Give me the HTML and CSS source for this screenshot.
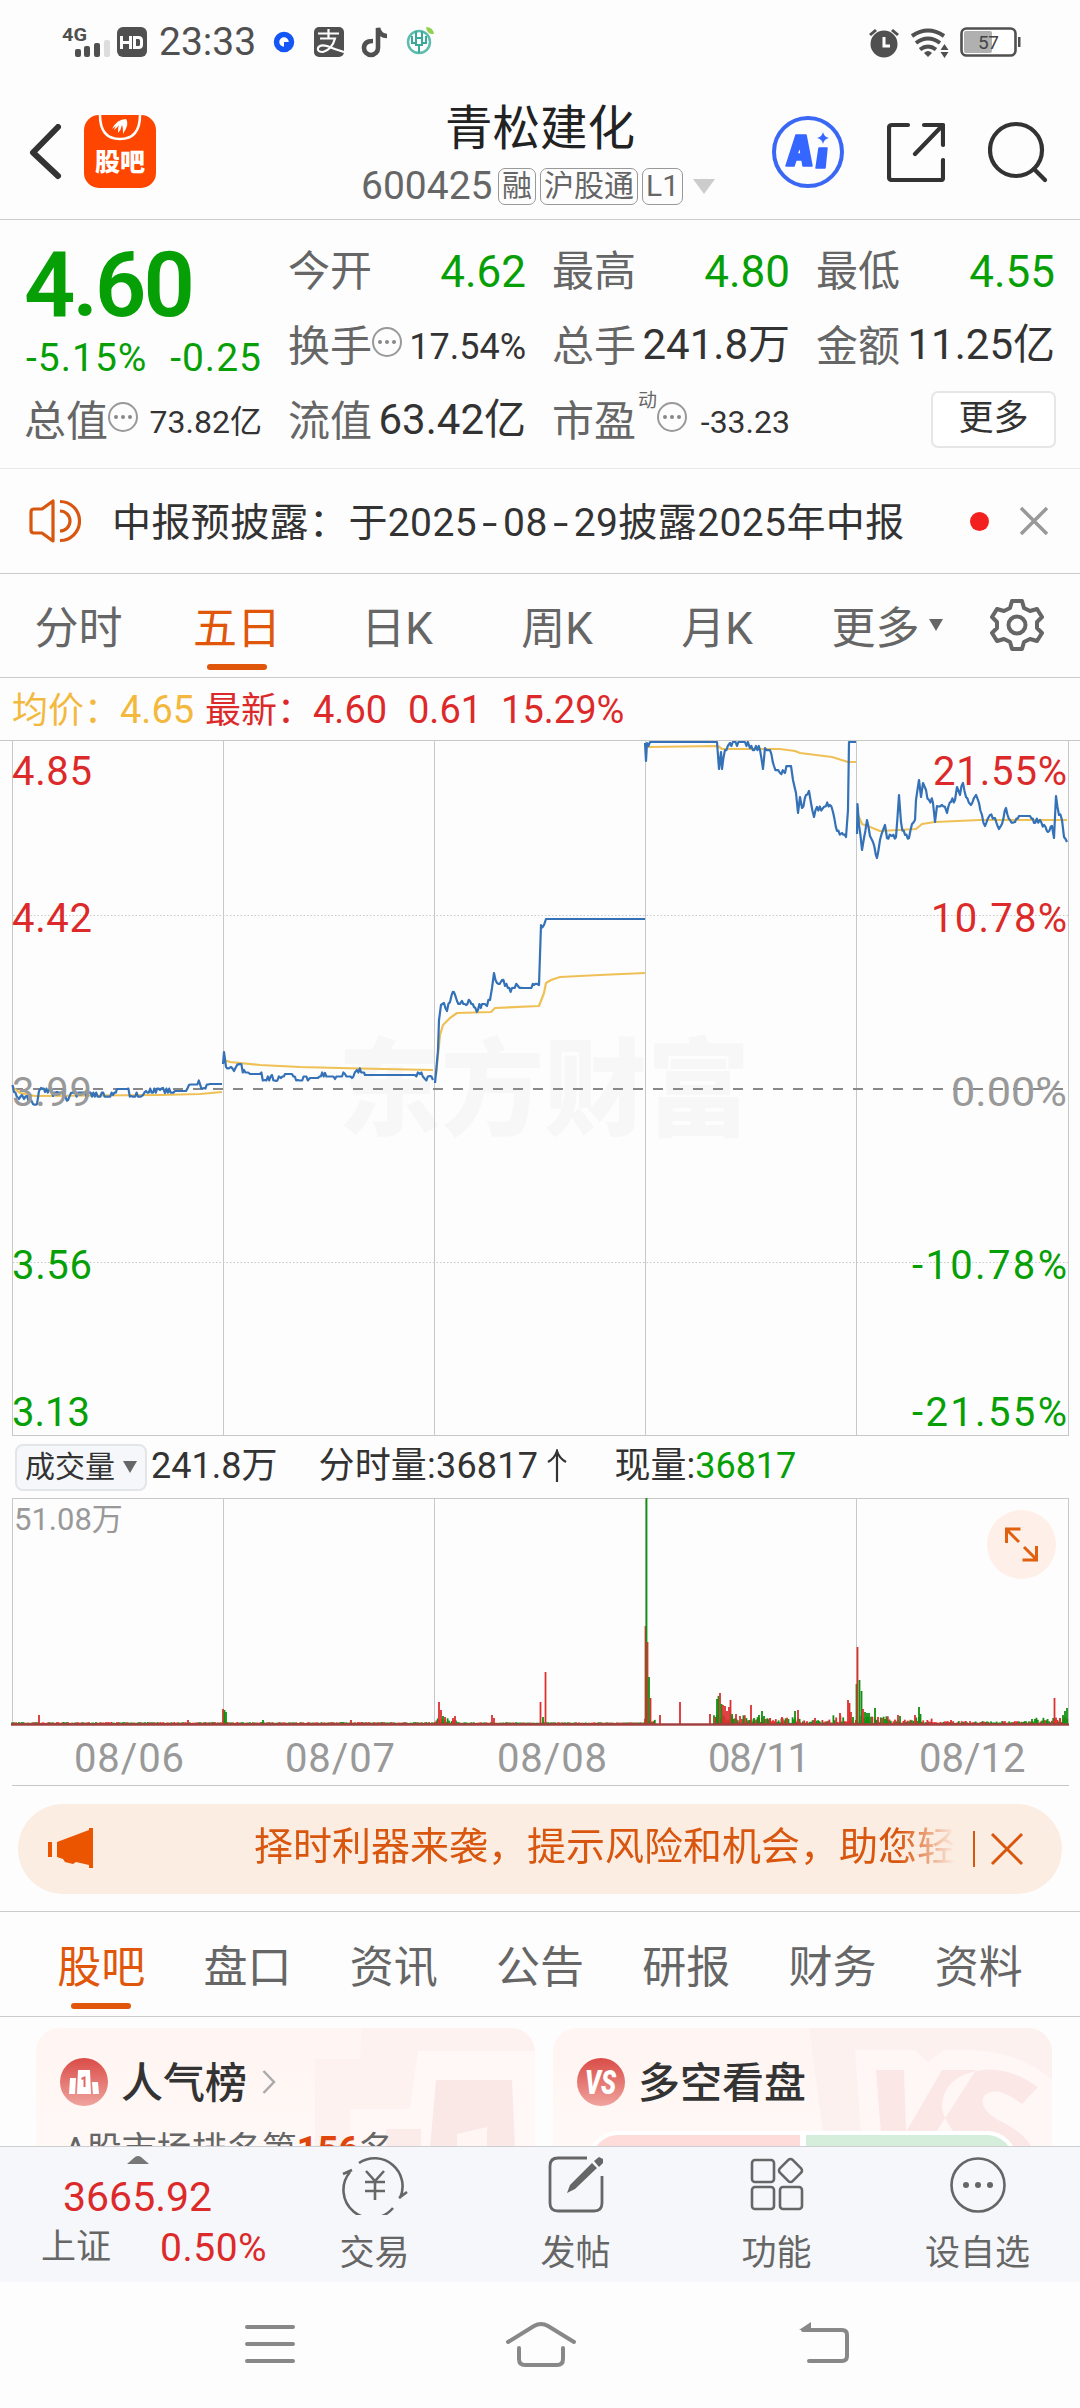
FILE: index.html
```html
<!DOCTYPE html>
<html lang="zh-CN">
<head>
    <meta charset="UTF-8">
    <meta name="viewport" content="width=device-width, initial-scale=1.0">
    <title>青松建化 600425</title>
    <link rel="stylesheet" href="styles.css">
</head>
<body>
    <!-- Status bar -->
    <div class="status">
        <svg class="status-left" width="90" height="36" viewBox="60 24 90 36">
            <text x="62" y="41" font-size="19" font-weight="700" fill="#505050" textLength="25" lengthAdjust="spacingAndGlyphs">4G</text>
            <g fill="#505050">
                <rect x="75" y="49" width="6" height="8" rx="2"/>
                <rect x="84" y="46" width="6" height="11" rx="2"/>
                <rect x="94" y="43" width="6" height="14" rx="2"/>
            </g>
            <rect x="104" y="40" width="6" height="17" rx="2" fill="#ddd"/>
            <rect x="117" y="27" width="30" height="30" rx="6" fill="#505050"/>
            <path d="M121.500 36v13M130.500 36v13M121.500 42.500h9M134.500 37.500h4q3 0 3 3v4q0 3-3 3h-4z" fill="none" stroke="#fff" stroke-width="3"/>
        </svg>
        <span class="clock">23:33</span>
        <svg width="170" height="36" viewBox="270 24 170 36">
            <circle cx="284" cy="42" r="7.500" fill="none" stroke="#1456f5" stroke-width="5.500"/>
            <path d="M284 42h6v-4l2 10h-8z" fill="#1456f5"/>
            <rect x="314" y="27" width="30" height="30" rx="5" fill="#505050"/>
            <path d="M318 33.500h21M328.500 29v9M320 38.500h15q-3 11-12 13.500q-6 0-5-4q2-4 9-2q7 3 17 6" fill="none" stroke="#fff" stroke-width="2.200"/>
            <path d="M373 41q-9 0-9 7a6.500 6.500 0 0 0 14 0V28q2 8 9 8" fill="none" stroke="#505050" stroke-width="4.600"/>
            <circle cx="419" cy="42" r="11" fill="none" stroke="#5dbcae" stroke-width="2.500"/>
            <path d="M416 31v7M422 31v7M412 36v7h3M426 36v7h-3M416 38h6v7h-6zM419 45v8" fill="none" stroke="#3aa999" stroke-width="2"/>
            <path d="M426 27q7 0 8 7q-7 1-8-7z" fill="#8fd14f"/>
        </svg>
        <svg class="status-right" width="156" height="36" viewBox="866 24 156 36">
            <g fill="#505050">
                <circle cx="884" cy="44" r="13.500"/>
                <path d="M869 34l6-5 2 2-6 5zM899 34l-6-5-2 2 6 5z"/>
                <path d="M928 57l-4-4q4-4 8 0z"/>
                <path d="M944.500 44l4 6h-8zM944.500 58l4-6h-8z"/>
            </g>
            <path d="M884 37v9h6" fill="none" stroke="#fff" stroke-width="3"/>
            <path d="M912 36q16-11 32 0M916 43q12-9 24 0M920 49.500q8-6 16 0" fill="none" stroke="#505050" stroke-width="4"/>
            <rect x="961.500" y="28.500" width="54" height="27" rx="5" fill="#fff" stroke="#505050" stroke-width="2.600"/>
            <rect x="964" y="31" width="28" height="22" rx="2" fill="#b0b0b0"/>
            <rect x="1018" y="37" width="2.500" height="10" fill="#505050"/>
            <text x="978" y="49" font-size="19" fill="#444" textLength="21">57</text>
        </svg>
    </div>

    <!-- Title bar -->
    <header class="header">
        <div class="header-side">
            <svg width="34" height="56" viewBox="0 0 34 56"><path d="M29 3L4 28.500L29 52" fill="none" stroke="#333" stroke-width="6" stroke-linecap="round" stroke-linejoin="round"/></svg>
            <div class="guba">
                <svg width="44" height="26" viewBox="0 0 44 26"><path d="M2 0q0 24 20 24T42 0" fill="none" stroke="#fff" stroke-width="2.500"/><path d="M14 14q5-10 14-10q4 4-3 15q0-7-1-9q-1 5-4 8q0-6 1-8q-2 3-5 5q1-3 2-4z" fill="#fff"/></svg>
                <span>股吧</span>
            </div>
        </div>
        <div class="header-title">
            <h1>青松建化</h1>
            <div class="code-row">
                <span class="code">600425</span>
                <span class="tag">融</span>
                <span class="tag">沪股通</span>
                <span class="tag">L1</span>
                <i class="drop"></i>
            </div>
        </div>
        <div class="header-icons">
            <svg width="72" height="74" viewBox="0 0 72 74">
                <circle cx="36" cy="37" r="34" fill="none" stroke="#3a68f5" stroke-width="4"/>
                <path d="M24 20h10l6 31h-9l-1-6h-6l-2 6h-8zM28 31l-3 8h4zM47 33h8l-2 20h-9z" fill="#3566ff" stroke="#3566ff" stroke-width="1.500" stroke-linejoin="round" fill-rule="evenodd"/>
                <path d="M51 17q1 5 6 6q-5 1-6 6q-1-5-6-6q5-1 6-6z" fill="#3566ff"/>
            </svg>
            <svg width="58" height="60" viewBox="0 0 58 60" fill="none" stroke="#333" stroke-width="4.200" stroke-linecap="round" stroke-linejoin="round"><path d="M21 3H5q-3 0-3 3v49q0 3 3 3h49q2 0 2-2V38M37 3h19v20M55 4L28 32"/></svg>
            <svg width="60" height="62" viewBox="0 0 60 62" fill="none" stroke="#333" stroke-width="4.200" stroke-linecap="round"><circle cx="28" cy="29" r="26"/><path d="M46 48l11 11"/></svg>
        </div>
    </header>

    <!-- Quote numbers -->
    <section class="quote">
        <div class="price">
            <div class="price-now">4.60</div>
            <div class="price-change"><span>-5.15%</span><span>-0.25</span></div>
        </div>
        <div class="cell"><label>今开</label><b class="green">4.62</b></div>
        <div class="cell"><label>最高</label><b class="green">4.80</b></div>
        <div class="cell"><label>最低</label><b class="green">4.55</b></div>
        <div class="cell"><label>换手</label><i class="info"></i><b class="mid">17.54%</b></div>
        <div class="cell"><label>总手</label><b>241.8万</b></div>
        <div class="cell"><label>金额</label><b>11.25亿</b></div>
        <div class="cell"><label>总值</label><i class="info"></i><b class="small">73.82亿</b></div>
        <div class="cell"><label>流值</label><b>63.42亿</b></div>
        <div class="cell"><label>市盈</label><sup>动</sup><i class="info"></i><b class="small">-33.23</b></div>
        <div class="cell"><button class="more">更多</button></div>
    </section>

    <!-- Notice -->
    <section class="notice">
        <svg width="52" height="46" viewBox="0 0 52 46" fill="none" stroke="#d9560f" stroke-width="3.200"><path d="M2 14q0-3 3-3h8l11-8v40l-11-8H5q-3 0-3-3zM31 3.500a19.500 19.500 0 0 1 0 39M31 13a10 10 0 0 1 0 20" stroke-linejoin="round"/></svg>
        <p>中报预披露：于2025<span>-</span>08<span>-</span>29披露2025年中报</p>
        <i class="dot"></i>
        <svg width="30" height="30" viewBox="0 0 30 30"><path d="M2 2l26 26M28 2L2 28" stroke="#999" stroke-width="3.500"/></svg>
    </section>

    <!-- Period tabs -->
    <nav class="periods">
        <a>分时</a>
        <a class="on">五日</a>
        <a>日K</a>
        <a>周K</a>
        <a>月K</a>
        <a>更多<i class="caret"></i></a>
        <svg width="54" height="54" viewBox="-27 -27 54 54" fill="none" stroke="#666" stroke-width="4"><path d="M-5-24H5L7-17L13-14L20-16L25-8L20-3V3L25 8L20 16L13 14L7 17L5 24H-5L-7 17L-13 14L-20 16L-25 8L-20 3V-3L-25-8L-20-16L-13-14L-7-17Z" stroke-linejoin="round"/><circle r="8.500"/></svg>
    </nav>

    <div class="legend">
        <span class="avg"><em>均价：</em>4.65</span>
        <span class="last"><em>最新：</em>4.60</span>
        <span>0.61</span>
        <span>15.29%</span>
    </div>

    <!-- Price chart -->
    <svg class="chart" width="1080" height="696" viewBox="0 740 1080 696">
        <text class="watermark" x="338" y="1127" textLength="412" lengthAdjust="spacingAndGlyphs">东方财富</text>
        <g class="grid">
            <path d="M0 740.500H1080M12 1435.500H1069M12.500 740V1436M223.500 740V1436M434.500 740V1436M645.500 740V1436M856.500 740V1436M1068.500 740V1436"/>
            <path d="M13 915.500H1068M13 1262.500H1068" stroke-dasharray="1.500 2"/>
        </g>
        <path d="M13 1089H1068" stroke="#888" stroke-width="2" stroke-dasharray="10 10"/>
        <g id="averages" class="line-avg"></g>
        <g id="prices" class="line-price"></g>
        <g class="axis">
            <text class="up" x="12" y="785" textLength="80">4.85</text>
            <text class="up" x="12" y="932" textLength="80">4.42</text>
            <text x="12" y="1106" textLength="80">3.99</text>
            <text class="down" x="12" y="1279" textLength="80">3.56</text>
            <text class="down" x="12" y="1426">3.13</text>
        </g>
        <g class="axis end">
            <text class="up" x="1067" y="785" textLength="134">21.55%</text>
            <text class="up" x="1067" y="932" textLength="136">10.78%</text>
            <text x="1067" y="1106" textLength="116" lengthAdjust="spacingAndGlyphs">0.00%</text>
            <text class="down" x="1067" y="1279" textLength="155">-10.78%</text>
            <text class="down" x="1067" y="1426" textLength="155">-21.55%</text>
        </g>
    </svg>

    <div class="volume-bar">
        <button>成交量<i class="caret"></i></button>
        <span>241.8万</span>
        <span class="minute">分时量:36817<svg width="22" height="34" viewBox="0 0 22 34"><path d="M11 33V2M2 13q7-4 9-11q2 7 9 11" fill="none" stroke="#333" stroke-width="2.200"/></svg></span>
        <span>现量:<b>36817</b></span>
    </div>

    <!-- Volume chart -->
    <svg class="chart" width="1080" height="289" viewBox="0 1498 1080 289">
        <path class="grid" d="M12 1498.500H1069M12.500 1498V1724M223.500 1498V1724M434.500 1498V1724M645.500 1498V1724M856.500 1498V1724M1068.500 1498V1724M12 1785.500H1069"/>
        <text class="vol-max" x="14" y="1530">51.08万</text>
        <g id="volumes"></g>
        <path d="M11 1724.500H1069" stroke="#a04040" stroke-width="2.400"/>
        <g class="axis">
            <text class="day" x="74" y="1772" textLength="110">08/06</text>
            <text class="day" x="285" y="1772" textLength="110">08/07</text>
            <text class="day" x="497" y="1772" textLength="110">08/08</text>
            <text class="day" x="708" y="1772" textLength="102">08/11</text>
            <text class="day" x="919" y="1772">08/12</text>
        </g>
        <circle cx="1021.500" cy="1544.500" r="34.500" fill="#fef0e8"/>
        <path d="M1006.500 1543v-14h14M1007 1530l12 12M1036.500 1546v14h-14M1036 1559l-12-12" fill="none" stroke="#e06010" stroke-width="3"/>
    </svg>

    <!-- Promo banner -->
    <div class="banner">
        <svg width="46" height="42" viewBox="0 0 46 42" fill="#eb5500"><path d="M0 14h4v15H0zM9 14L41 2V0h4v40h-4v-3l-13-3-3 2-8-2-2-3-6-2z"/></svg>
        <div class="banner-text">择时利器来袭，提示风险和机会，助您轻</div>
        <i></i>
        <svg width="34" height="34" viewBox="0 0 34 34"><path d="M2 2l30 30M32 2L2 32" stroke="#d9560f" stroke-width="3"/></svg>
    </div>

    <!-- Content tabs -->
    <nav class="sections">
        <a class="on">股吧</a>
        <a>盘口</a>
        <a>资讯</a>
        <a>公告</a>
        <a>研报</a>
        <a>财务</a>
        <a>资料</a>
    </nav>

    <div class="cards">
        <div class="card">
            <svg class="card-art" width="499" height="120" viewBox="36 2028 499 120">
                <path d="M362 2028H535V2148H315V2059H360z" fill="#fdf2f0"/>
                <path d="M418 2051H537L541 2148H350V2109H410z" fill="#fff8f6"/>
                <path d="M436 2080h76l3 68H430z" fill="#fae8e6"/>
                <path d="M386 2129h35v19h-35z" fill="#fbecea"/>
                <path d="M457 2134l30-7v21h-30z" fill="#fff5f3"/>
            </svg>
            <div class="card-head">
                <svg width="48" height="48" viewBox="0 0 48 48">
                    <defs><linearGradient id="red" x2="0" y2="1"><stop stop-color="#d94c47"/><stop offset="1" stop-color="#f0a39e"/></linearGradient></defs>
                    <circle cx="24" cy="24" r="24" fill="url(#red)"/>
                    <path d="M10 20h6l-1 16H9zM18 12h12l1 24H17zM32 24h6l1 12h-6z" fill="#fff"/>
                    <path d="M21.500 21l3-1.500V29" fill="none" stroke="#dc6963" stroke-width="2"/>
                </svg>
                <h2>人气榜</h2>
                <svg class="arrow" width="14" height="26" viewBox="0 0 14 26"><path d="M1.500 2L12 13L1.500 24" fill="none" stroke="#aaa" stroke-width="2.500"/></svg>
            </div>
            <p>A股市场排名第<b>156</b>名</p>
        </div>
        <div class="card">
            <svg class="card-art" width="499" height="120" viewBox="553 2028 499 120">
                <path d="M809 2028H1052V2148H825z" fill="#fdf1ef"/>
                <path d="M855 2050h60l13 12 16-12q70-5 108 30v68H862z" fill="#fff7f5"/>
                <!-- oversized VS emblem, runs off the bottom of the card -->
                <path d="M876 2070h28l2 62 36-62h34l-50 78h-44zM1038 2087q-28-20-56-17q-40 6-40 38q4 22 30 40h60q-8-16-34-28q-20-12-14-24q12-12 38 8z" fill="#fbe8e6"/>
            </svg>
            <div class="card-head">
                <svg width="48" height="48" viewBox="0 0 48 48">
                    <circle cx="24" cy="24" r="24" fill="url(#red)"/>
                    <text x="8" y="36" font-size="33" font-weight="900" font-style="italic" fill="#fff" textLength="31" lengthAdjust="spacingAndGlyphs">VS</text>
                </svg>
                <h2>多空看盘</h2>
            </div>
            <div class="ratio"><i class="long"></i><i class="short"></i></div>
        </div>
    </div>

    <!-- Bottom bar -->
    <footer class="toolbar">
        <div class="index">
            <svg width="22" height="8" viewBox="0 0 22 8"><path d="M0 8L8 1q3-2 6 0l8 7z" fill="#777"/></svg>
            <div class="index-value">3665.92</div>
            <div class="index-name"><span>上证</span><b>0.50%</b></div>
        </div>
        <div class="tool">
            <svg width="66" height="60" viewBox="0 0 66 60" fill="none" stroke="#666" stroke-width="2.600"><path d="M17 8A28 28 0 0 1 58 43M51 53A28 28 0 0 1 8 17M1 19l9-4M57 43l8-6"/><path d="M24 16l9 10 9-10M33 26v19M23 27h20M23 36h20"/></svg>
            <span>交易</span>
        </div>
        <div class="tool">
            <svg width="56" height="60" viewBox="0 0 56 60"><path d="M39 3H10q-8 0-8 8v37q0 8 8 8h36q8 0 8-8V21" fill="none" stroke="#666" stroke-width="2.800"/><path d="M19 38l3-8L44 8l5 5L27 34zM46 6l5-4 4 2v4l-4 4z" fill="#666"/></svg>
            <span>发帖</span>
        </div>
        <div class="tool">
            <svg width="54" height="60" viewBox="0 0 54 60" fill="none" stroke="#666" stroke-width="2.600"><rect x="2" y="5" width="22" height="22" rx="3"/><rect x="2" y="32" width="22" height="22" rx="3"/><rect x="30" y="32" width="22" height="22" rx="3"/><rect x="31.500" y="6.500" width="18" height="18" rx="3" transform="rotate(45 40.500 15.500)"/></svg>
            <span>功能</span>
        </div>
        <div class="tool">
            <svg width="58" height="60" viewBox="0 0 58 60"><circle cx="29" cy="30" r="26.500" fill="none" stroke="#666" stroke-width="2.600"/><g fill="#666"><circle cx="17" cy="30" r="3"/><circle cx="29" cy="30" r="3"/><circle cx="41" cy="30" r="3"/></g></svg>
            <span>设自选</span>
        </div>
    </footer>

    <!-- System navigation -->
    <div class="sysnav">
        <svg width="52" height="46" viewBox="0 0 52 46"><path d="M3 6h46M3 23h46M3 40h46"/></svg>
        <svg width="72" height="46" viewBox="0 0 72 46"><path d="M3 21L29 5q7-4 14 0l26 16M14 27v11q0 6 6 6h32q6 0 6-6V27"/></svg>
        <svg width="54" height="46" viewBox="0 0 54 46"><path d="M6 9h39q5 0 5 5v21q0 5-5 5H12"/><path d="M2 9l12-8v8z" fill="#888" stroke="none"/></svg>
    </div>

    <script src="script.js"></script>
</body>
</html>
```
FILE: styles.css
```css
* {
    box-sizing: border-box;
}
body {
    margin: 0;
    width: 1080px;
    height: 2408px;
    overflow: hidden;
    background-color: #fdfdfd;
    color: #333;
    font-family: Roboto, "Noto Sans CJK SC", sans-serif;
}
svg {
    display: block;
    flex: none;
}
i, em {
    font-style: normal;
}
b {
    font-weight: 400;
}
button {
    font-family: inherit;
    color: #333;
    padding: 0;
}
.green {
    color: #06a006;
}

/* status bar */
.status {
    display: flex;
    height: 84px;
    padding: 24px 58px 24px 60px;
}
.clock {
    width: 110px;
    margin-left: 9px;
    margin-right: 1px;
    font-size: 39px;
    line-height: 37px;
    color: #505050;
}
.status-right {
    margin-left: auto;
}

/* title bar */
.header {
    display: flex;
    height: 136px;
    border-bottom: 1px solid #ccc;
}
.header-side {
    display: flex;
    align-items: center;
    width: 330px;
    padding: 0 0 0 29px;
}
.guba {
    width: 72px;
    height: 73px;
    margin-left: 21px;
    border-radius: 15px;
    background-color: #ff4600;
    color: #fff;
    display: flex;
    flex-direction: column;
    align-items: center;
}
.guba span {
    font-size: 25px;
    font-weight: 900;
    line-height: 43px;
}
.header-title {
    width: 420px;
    text-align: center;
}
.header-title h1 {
    margin: 0;
    padding-top: 19px;
    font-size: 47.5px;
    font-weight: 400;
    line-height: 52px;
    color: #222;
}
.code-row {
    display: flex;
    align-items: center;
    gap: 4px;
    margin-top: 12px;
    padding-left: 31px;
    height: 38px;
}
.code {
    font-size: 39px;
    color: #666;
    width: 133px;
    text-align: left;
}
.tag {
    height: 37px;
    padding: 0 3px;
    border: 1px solid #999;
    border-radius: 7px;
    font-size: 30px;
    line-height: 34px;
    color: #666;
}
.drop {
    margin-left: 6px;
    border: 11px solid transparent;
    border-top: 15px solid #ccc;
    border-bottom: 0;
}
.header-icons {
    display: flex;
    flex: 1;
    align-items: center;
    padding: 0 0 0 22px;
    gap: 43px;
}

/* quote numbers */
.quote {
    display: grid;
    grid-template-columns: 238px 238px 238px 239px;
    grid-template-rows: repeat(3, 75px);
    column-gap: 26px;
    height: 249px;
    padding: 14px 25px 0 24px;
    border-bottom: 1px solid #e8e8e8;
}
.price {
    grid-row: span 2;
    color: #06a006;
}
.price-now {
    margin-top: 8px;
    font-size: 90px;
    font-weight: 600;
    line-height: 88px;
    letter-spacing: -3px;
}
.price-change {
    display: flex;
    justify-content: space-between;
    margin: 5px 0 0 2px;
    font-size: 39px;
    line-height: 46px;
    letter-spacing: 1px;
}
.cell {
    display: flex;
    align-items: center;
    white-space: nowrap;
}
.cell label {
    font-size: 42px;
    line-height: 60px;
    color: #666;
}
.cell b {
    margin-left: auto;
    font-size: 42px;
    line-height: 56px;
    padding-bottom: 3px;
}
.cell b.green {
    padding-bottom: 0;
    font-size: 44px;
}
.cell b.mid {
    padding-bottom: 0;
    font-size: 36px;
}
.cell b.small {
    padding-bottom: 0;
    font-size: 32px;
}
.cell sup {
    align-self: flex-start;
    margin-top: 1px;
    width: 21px;
    font-size: 19px;
    text-align: right;
    color: #666;
}
.info {
    display: flex;
    align-items: center;
    justify-content: center;
    width: 30px;
    height: 30px;
    margin: -10px 0 0 0;
    border: 2px solid #999;
    border-radius: 50%;
}
.info::before {
    content: "";
    width: 4px;
    height: 4px;
    border-radius: 50%;
    background-color: #888;
    box-shadow: -7px 0 #888, 7px 0 #888;
}
.more {
    width: 125px;
    height: 57px;
    margin: -5px -1px 0 auto;
    border: 2px solid #e6e6e6;
    border-radius: 7px;
    background-color: #fff;
    font-size: 35px;
    line-height: 50px;
}

/* notice */
.notice {
    display: flex;
    align-items: center;
    height: 105px;
    padding: 0 30px 0 29px;
    border-bottom: 1px solid #ccc;
}
.notice p {
    width: 858px;
    margin: -4px 0 0 31px;
    font-size: 39px;
    letter-spacing: 0.4px;
    white-space: nowrap;
}
.notice p span {
    display: inline-block;
    width: 26px;
    text-align: center;
    transform: scaleX(1.4);
}
.dot {
    width: 19px;
    height: 19px;
    margin-right: 30px;
    border-radius: 50%;
    background-color: #f32020;
}

/* period tabs */
.periods {
    display: flex;
    align-items: center;
    height: 104px;
    padding-bottom: 2px;
    border-bottom: 1px solid #ccc;
}
.periods a, .sections a {
    display: flex;
    align-items: center;
    justify-content: center;
    position: relative;
    height: 100%;
    font-size: 44px;
    color: #666;
}
.periods a {
    width: 160px;
}
.periods a:first-child {
    width: 157px;
}
.periods a:nth-child(6) {
    width: 180px;
}
.periods svg {
    margin-left: 13px;
}
.periods .on, .sections .on {
    color: #e0560a;
}
.on::after {
    content: "";
    position: absolute;
    left: calc(50% - 30px);
    bottom: 5px;
    width: 60px;
    height: 6px;
    border-radius: 3px;
    background-color: #e0560a;
}
.caret {
    margin-left: 9px;
    border: 7px solid transparent;
    border-top: 12px solid #666;
    border-bottom: 0;
}

.legend {
    display: flex;
    height: 62px;
    padding-left: 12px;
    font-size: 38px;
    line-height: 64px;
    color: #dc2a2a;
    gap: 19px;
    white-space: nowrap;
}
.legend em {
    font-size: 36px;
}
.legend .avg {
    color: #f3b93f;
    width: 174px;
}
.legend .last {
    width: 184px;
}

/* charts */
.chart text {
    font-family: Roboto, "Noto Sans CJK SC", sans-serif;
}
.chart .watermark {
    font-size: 106px;
    font-weight: 900;
    fill: #f7f7f7;
}
.grid {
    fill: none;
    stroke: #c8c8c8;
    stroke-width: 1;
}
.line-price, .line-avg {
    fill: none;
    stroke: #3471b7;
    stroke-width: 2.2;
    stroke-linejoin: round;
}
.line-avg {
    stroke: #efc055;
}
.axis {
    font-size: 40px;
    fill: #999;
}
.axis.end {
    text-anchor: end;
}
.axis .up {
    fill: #dc2a2a;
}
.axis .down {
    fill: #06a006;
}
.vol-max {
    font-size: 31px;
    fill: #999;
}

.volume-bar {
    display: flex;
    align-items: center;
    height: 62px;
    padding-left: 15px;
    font-size: 36px;
    line-height: 56px;
    white-space: nowrap;
}
.volume-bar span {
    padding-bottom: 2px;
}
.volume-bar button {
    display: flex;
    align-items: center;
    width: 132px;
    height: 47px;
    margin-right: 4px;
    padding-left: 8px;
    border: 2px solid #e4e5e8;
    border-radius: 8px;
    background-color: #f6f7fa;
    font-size: 30px;
    line-height: 40px;
}
.volume-bar .caret {
    margin-left: 8px;
}
.volume-bar .minute {
    display: flex;
    align-items: center;
    width: 252px;
    margin-left: 41px;
    margin-right: 44px;
    letter-spacing: 0.2px;
}
.minute svg {
    margin-left: 8px;
}
.volume-bar b {
    color: #06a006;
}

/* banner */
.banner {
    display: flex;
    align-items: center;
    height: 90px;
    margin: 17px 18px;
    padding-left: 30px;
    border-radius: 45px;
    background-color: #fcede3;
}
.banner-text {
    width: 701px;
    height: 60px;
    margin-left: 160px;
    margin-top: -4px;
    overflow: hidden;
    font-size: 39px;
    line-height: 60px;
    white-space: nowrap;
    color: #d9560f;
    -webkit-mask-image: linear-gradient(to right, #000 92%, transparent);
    mask-image: linear-gradient(to right, #000 92%, transparent);
}
.banner i {
    width: 2px;
    height: 36px;
    margin: 0 15px 0 18px;
    background-color: #d9560f;
}

/* content tabs */
.sections {
    display: flex;
    height: 106px;
    padding: 0 28px;
    border-top: 1px solid #ccc;
    border-bottom: 1px solid #ccc;
}
.sections a {
    flex: 1;
}
.sections .on::after {
    bottom: 7px;
}

.cards {
    display: flex;
    gap: 18px;
    height: 129px;
    padding: 11px 28px 0 36px;
    overflow: hidden;
}
.card {
    position: relative;
    width: 499px;
    height: 160px;
    border-radius: 24px;
    overflow: hidden;
    background: linear-gradient(#fff5f2, #fffaf8);
}
.card-art {
    position: absolute;
    left: 0;
    top: 0;
}
.card-head {
    position: relative;
    display: flex;
    align-items: center;
    height: 48px;
    margin: 30px 24px 0;
}
.card h2 {
    margin: -5px 15px 0 13px;
    font-size: 42px;
    font-weight: 500;
}
.card p {
    position: relative;
    margin: 18px 0 0 28px;
    font-size: 35px;
    line-height: 52px;
    color: #666;
}
.card p b {
    color: #e0460c;
    font-size: 36px;
    font-weight: 700;
}
.ratio {
    position: relative;
    display: flex;
    gap: 6px;
    height: 60px;
    margin: 25px 35px 0;
    border: 4px solid #fff;
    border-radius: 32px;
    background-color: #fff;
    overflow: hidden;
}
.ratio i {
    flex: 1;
}
.long {
    background-color: #fddcd9;
}
.short {
    background-color: #d5eddb;
}

/* bottom bar */
.toolbar {
    display: flex;
    height: 136px;
    border-top: 1px solid #ccced2;
    background-color: #f6f7fa;
}
.index {
    width: 274px;
    padding: 9px 0 0 41px;
}
.index svg {
    margin-left: 86px;
}
.index-value {
    margin: 9px 0 0 22px;
    font-size: 41px;
    line-height: 48px;
    color: #dc2a2a;
}
.index-name {
    display: flex;
    align-items: center;
    font-size: 35px;
    line-height: 54px;
    color: #666;
}
.index-name b {
    margin-left: 49px;
    font-size: 39px;
    letter-spacing: 0.5px;
    color: #dc2a2a;
}
.tool {
    display: flex;
    flex-direction: column;
    align-items: center;
    width: 201px;
    padding-top: 8px;
    font-size: 35px;
    line-height: 50px;
    color: #666;
}
.tool span {
    margin-top: 14px;
}

.sysnav {
    display: flex;
    height: 126px;
    padding: 39px 0 0 244px;
}
.sysnav svg {
    fill: none;
    stroke: #888;
    stroke-width: 4;
    stroke-linecap: round;
}
.sysnav svg:nth-child(2) {
    margin: 0 220px 0 209px;
}
```
FILE: script.js
```js
// One entry per trading day, x,y pairs on the chart canvas
const prices = [
    '12.5,1085 14,1092 19,1099 22,1095 24,1099 27,1096 30,1099 33,1104 37,1104 39,1091 41,1088 45,1092 50,1088 53,1096 57,1092 64,1096 68,1100 71,1093 113,1095 117,1089 127,1089 131,1096 143,1095 146,1091 160,1090 163,1088 165,1093 175,1091 186,1091 189,1085 200,1084 204,1088 210,1084 222,1084',
    '223,1064 224,1052 226,1067 231,1067 234,1071 236,1067 240,1064 244,1070 250,1074 260,1074 265,1080 272,1075 276,1081 281,1078 285,1074 292,1074 298,1080 310,1078 318,1078 325,1073 335,1079 345,1074 352,1078 357,1070 365,1075 415,1075 420,1074 425,1079 430,1076 433,1080',
    '435,1083 438,1050 439,1020 441,1005 444,1003 447,1011 450,1002 454,992 457,1001 462,1001 466,1005 470,1001 474,1007 478,1010 482,1004 487,1006 490,1000 492,988 494,973 497,983 502,980 505,986 512,988 518,986 523,988 530,988 534,985 539,985 541,925 544,925 546,919 645,919',
    '645,743 646,761 647,743 650,742 717,742 719,769 721,752 722,769 725,750 730,743 745,742 750,748 756,746 760,750 763,769 765,748 770,750 774,766 780,773 785,773 788,766 791,766 793,780 796,793 798,813 800,797 802,808 806,795 809,791 811,803 814,817 817,807 823,808 830,805 833,812 837,831 842,833 846,837 848,810 849,742 856,742',
    '857,834 857.5,804 859,825 862,850 864,838 867,820 870,836 873,842 877,858 880,840 885,825 887,838 892,836 896,837 899,795 901,822 905,835 909,838 912,824 915,820 916,800 919,780 921,797 923,783 926,790 929,800 933,803 935,822 937,806 942,805 947,813 951,802 955,800 957,787 960,795 963,783 966,797 971,805 976,795 979,803 982,815 985,826 990,815 995,818 999,829 1002,824 1006,808 1010,820 1015,822 1019,816 1030,816 1034,823 1040,820 1044,825 1048,832 1052,826 1054,838 1056,796 1059,815 1062,820 1064,837 1067,842'
];
const averages = [
    '12.5,1087 20,1093 35,1096 160,1095 200,1094 222,1092',
    '224,1060 230,1062 260,1065 300,1067 360,1068.5 433,1070',
    '436,1075 440,1035 443,1025 450,1018 457,1013 491,1012 495,1008 539,1006 544,993 546,983 551,980 560,977 600,975 645,973',
    '648,747 718,746 722,749 780,749 795,751 800,753 832,757 848,762 856,762',
    '858,815 862,824 870,827 880,831 898,830 916,829 922,824 935,822 980,820 1067,820'
];

// x, height, colour (r = up, g = down)
const peaks = [
    [39, 9, 'r'], [188, 4, 'r'], [223, 15, 'r'], [224.5, 14, 'g'], [226, 12, 'g'], [263, 4, 'g'], [351, 4, 'r'],
    [439, 22, 'r'], [441, 14, 'r'], [443, 8, 'g'], [445, 7, 'r'], [453, 6, 'r'], [455, 8, 'r'], [492, 9, 'r'], [494, 6, 'r'],
    [540.5, 22, 'r'], [543, 7, 'g'], [545.5, 52, 'r'], [645.5, 98, 'r'], [646.5, 226, 'g'], [647.5, 82, 'r'],
    [649, 47, 'g'], [650.5, 26, 'r'], [660, 9, 'r'], [680, 22, 'r'], [710, 10, 'r'], [717, 25, 'g'], [718.5, 28, 'g'],
    [720, 31, 'r'], [721.5, 20, 'g'], [723, 19, 'r'], [725, 18, 'r'], [727, 13, 'r'], [729, 17, 'r'], [730.5, 24, 'r'],
    [732, 10, 'g'], [736, 10, 'r'], [740, 8, 'r'], [751, 19, 'r'], [754, 6, 'g'], [759, 9, 'g'], [762, 13, 'g'],
    [764, 8, 'g'], [770, 6, 'r'], [782, 7, 'r'], [795, 13, 'g'], [798, 14, 'r'], [815, 6, 'r'], [840, 11, 'r'],
    [848, 24, 'r'], [849.5, 21, 'r'], [851, 12, 'r'], [856.5, 40, 'g'], [857.5, 77, 'r'], [859.5, 44, 'g'],
    [861.5, 33, 'g'], [863, 15, 'r'], [865, 12, 'g'], [867, 11, 'g'], [869, 11, 'g'], [875, 16, 'g'], [878, 7, 'r'],
    [882, 6, 'r'], [898, 9, 'r'], [900, 8, 'g'], [915, 9, 'r'], [919, 17, 'g'], [920.5, 10, 'g'], [951, 4, 'r'],
    [1032, 5, 'g'], [1054.5, 26, 'r'], [1060, 6, 'r'], [1063, 9, 'g'], [1065, 13, 'g'], [1067, 16, 'g']
];
// quiet trading between the peaks: from, to, max height
const quiet = [
    [12, 435, 1], [435, 460, 5], [460, 645, 0.8], [645, 655, 6], [714, 745, 8], [745, 800, 6],
    [800, 832, 4], [832, 856, 8], [857, 888, 8], [888, 912, 4], [912, 935, 6], [935, 1035, 2], [1035, 1068, 6]
];

const TICK = 4.03; // height of one cent
const TOP = 742;

let seed = 11;
function random() {
    seed = (seed * 16807) % 2147483647;
    return seed / 2147483647;
}

// adds the one-tick flicker of minute prices between the given points
function flicker(day) {
    const pts = day.split(' ').map(p => p.split(',').map(Number));
    const out = [];
    pts.forEach((p, i) => {
        out.push(p.join(','));
        const next = pts[i + 1];
        if (!next || (p[1] === next[1] && next[0] - p[0] > 6)) return;
        for (let x = p[0] + 1.4; x < next[0] - 1; x += 1.4) {
            const y = p[1] + (next[1] - p[1]) * (x - p[0]) / (next[0] - p[0]) + (random() - 0.5) * 5;
            const snapped = TOP + Math.max(0, Math.round((y - TOP) / TICK)) * TICK;
            out.push(x.toFixed(1) + ',' + snapped.toFixed(1));
        }
    });
    return out.join(' ');
}

const line = points => `<polyline points="${points}"/>`;
document.getElementById('prices').innerHTML = prices.map(d => line(flicker(d))).join('');
document.getElementById('averages').innerHTML = averages.map(line).join('');

const bars = [];
quiet.forEach(([from, to, max]) => {
    for (let x = from; x < to; x += 1.4) {
        bars.push([x, 1 + random() * max, random() > 0.5 ? 'r' : 'g']);
    }
});
document.getElementById('volumes').innerHTML = bars.concat(peaks).map(([x, h, c]) =>
    `<rect x="${(x - 0.9).toFixed(1)}" y="${(1724 - h).toFixed(1)}" width="1.8" height="${h.toFixed(1)}" fill="${c === 'r' ? '#dc3030' : '#109010'}"/>`
).join('');
```
